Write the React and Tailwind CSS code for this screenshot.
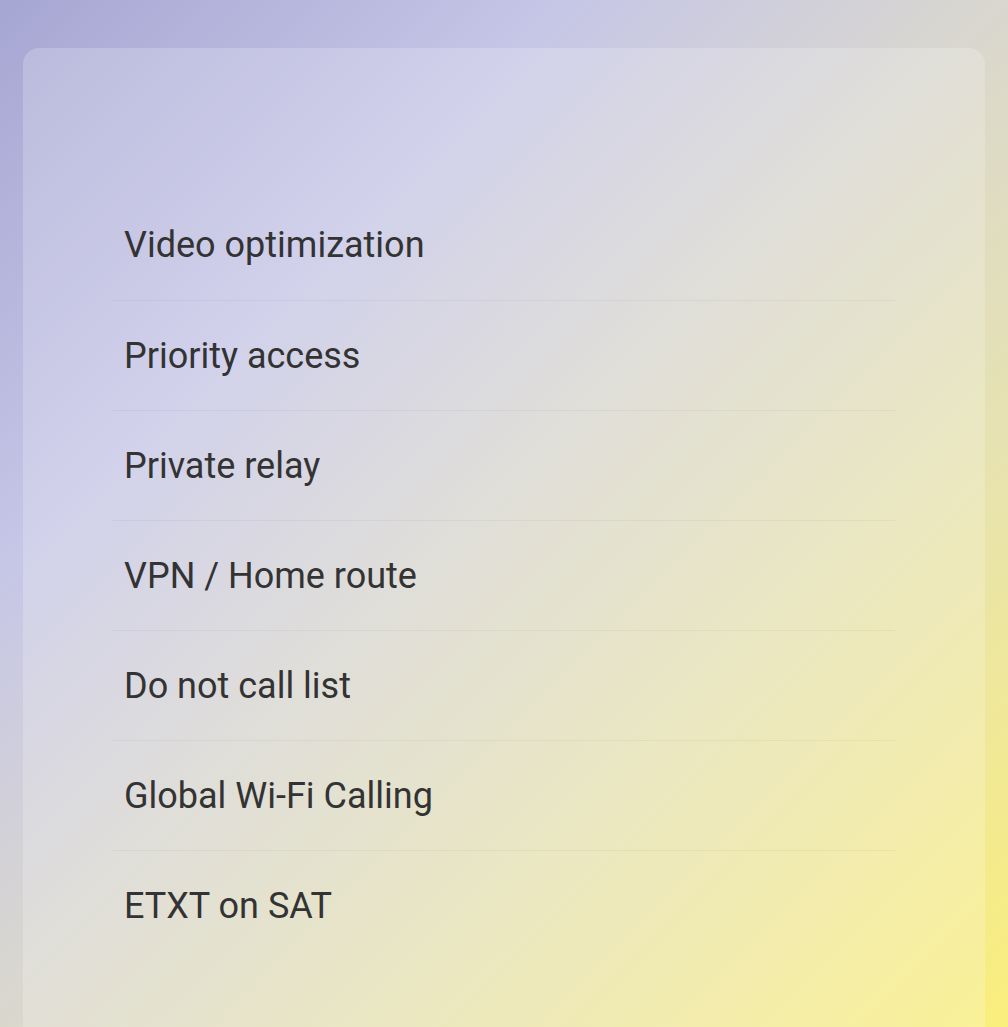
const features = [
  "Video optimization",
  "Priority access",
  "Private relay",
  "VPN / Home route",
  "Do not call list",
  "Global Wi-Fi Calling",
  "ETXT on SAT",
];

const App = () => {
  return (
    <div className="min-h-screen h-[1027px] overflow-hidden bg-[linear-gradient(135deg,#a6a6d3_0%,#c6c6e7_28%,#d8d6d0_48%,#e6e2b2_70%,#faee7c_100%)] px-[23px] pt-[48px] font-['Roboto',sans-serif]">
      <div className="h-full rounded-t-2xl bg-white/20 px-[90px] pt-[142px]">
        <ul className="flex flex-col">
          {features.map((name, i) => (
            <li
              key={name}
              className={
                i === 0
                  ? "flex h-[110px] items-center pl-[11px] text-[36px] text-[#333333]"
                  : "flex h-[110px] items-center border-t border-black/[0.04] pl-[11px] text-[36px] text-[#333333]"
              }
            >
              {name}
            </li>
          ))}
        </ul>
      </div>
    </div>
  );
};

export default App;
